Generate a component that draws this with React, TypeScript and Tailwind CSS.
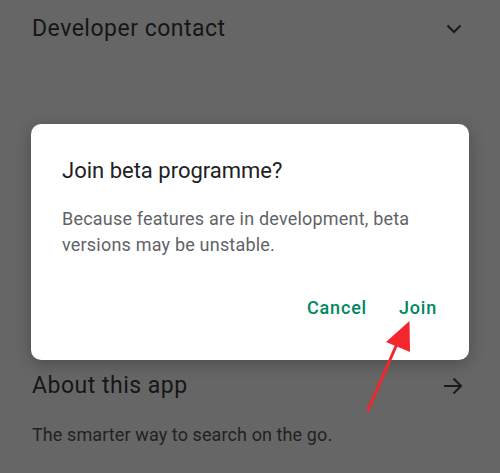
import React from "react";

export default function App() {
  return (
    <div
      className="relative w-[500px] h-[473px] overflow-hidden bg-[#666666] text-[#161616]"
      style={{ fontFamily: "Roboto, 'Noto Sans', sans-serif" }}
    >
      <div className="flex items-center justify-between pl-[32px] pr-[38px] pt-[14px] h-[30px] box-content">
        <span className="text-[23px] leading-[30px] tracking-[0.5px]">Developer contact</span>
        <svg width="16" height="10" viewBox="0 0 16 10" className="-mt-[1px]">
          <path d="M1.5 1.5 L8 8 L14.5 1.5" fill="none" stroke="#1a1a1a" strokeWidth="2" />
        </svg>
      </div>

      <div className="mx-[31px] mt-[80px] h-[236px] rounded-[10px] bg-white px-[31px] pt-[32px] shadow-[0_4px_16px_rgba(0,0,0,0.25)] flex flex-col">
        <div className="text-[22px] leading-[30px] text-[#202124]">Join beta programme?</div>
        <div className="mt-[20px] text-[18px] leading-[26px] text-[#5f6368] tracking-[0.2px]">
          Because features are in development, beta versions may be unstable.
        </div>
        <div className="mt-auto mb-[40px] flex justify-end gap-[32px] pr-[1px] text-[18px] font-medium text-[#01875f] leading-[24px] tracking-[0.8px]">
          <span>Cancel</span>
          <span>Join</span>
        </div>
      </div>

      <div className="flex items-center justify-between pl-[32px] pr-[37px] mt-[12px] h-[28px]">
        <span className="text-[23px] leading-[28px] tracking-[0.5px]">About this app</span>
        <svg width="20" height="18" viewBox="0 0 20 18">
          <path d="M1 9 H18 M10.5 1.5 L18 9 L10.5 16.5" fill="none" stroke="#1a1a1a" strokeWidth="2" />
        </svg>
      </div>
      <div className="pl-[32px] mt-[23px] text-[18px] leading-[24px] text-[#222222] tracking-[0.1px]">
        The smarter way to search on the go.
      </div>

      <svg className="absolute left-0 top-0 pointer-events-none" width="500" height="473" viewBox="0 0 500 473">
        <line x1="368" y1="410" x2="400" y2="337" stroke="#f2262b" strokeWidth="3" strokeLinecap="round" />
        <polygon points="409.5,321 386,342 410,352" fill="#f2262b" />
      </svg>
    </div>
  );
}
